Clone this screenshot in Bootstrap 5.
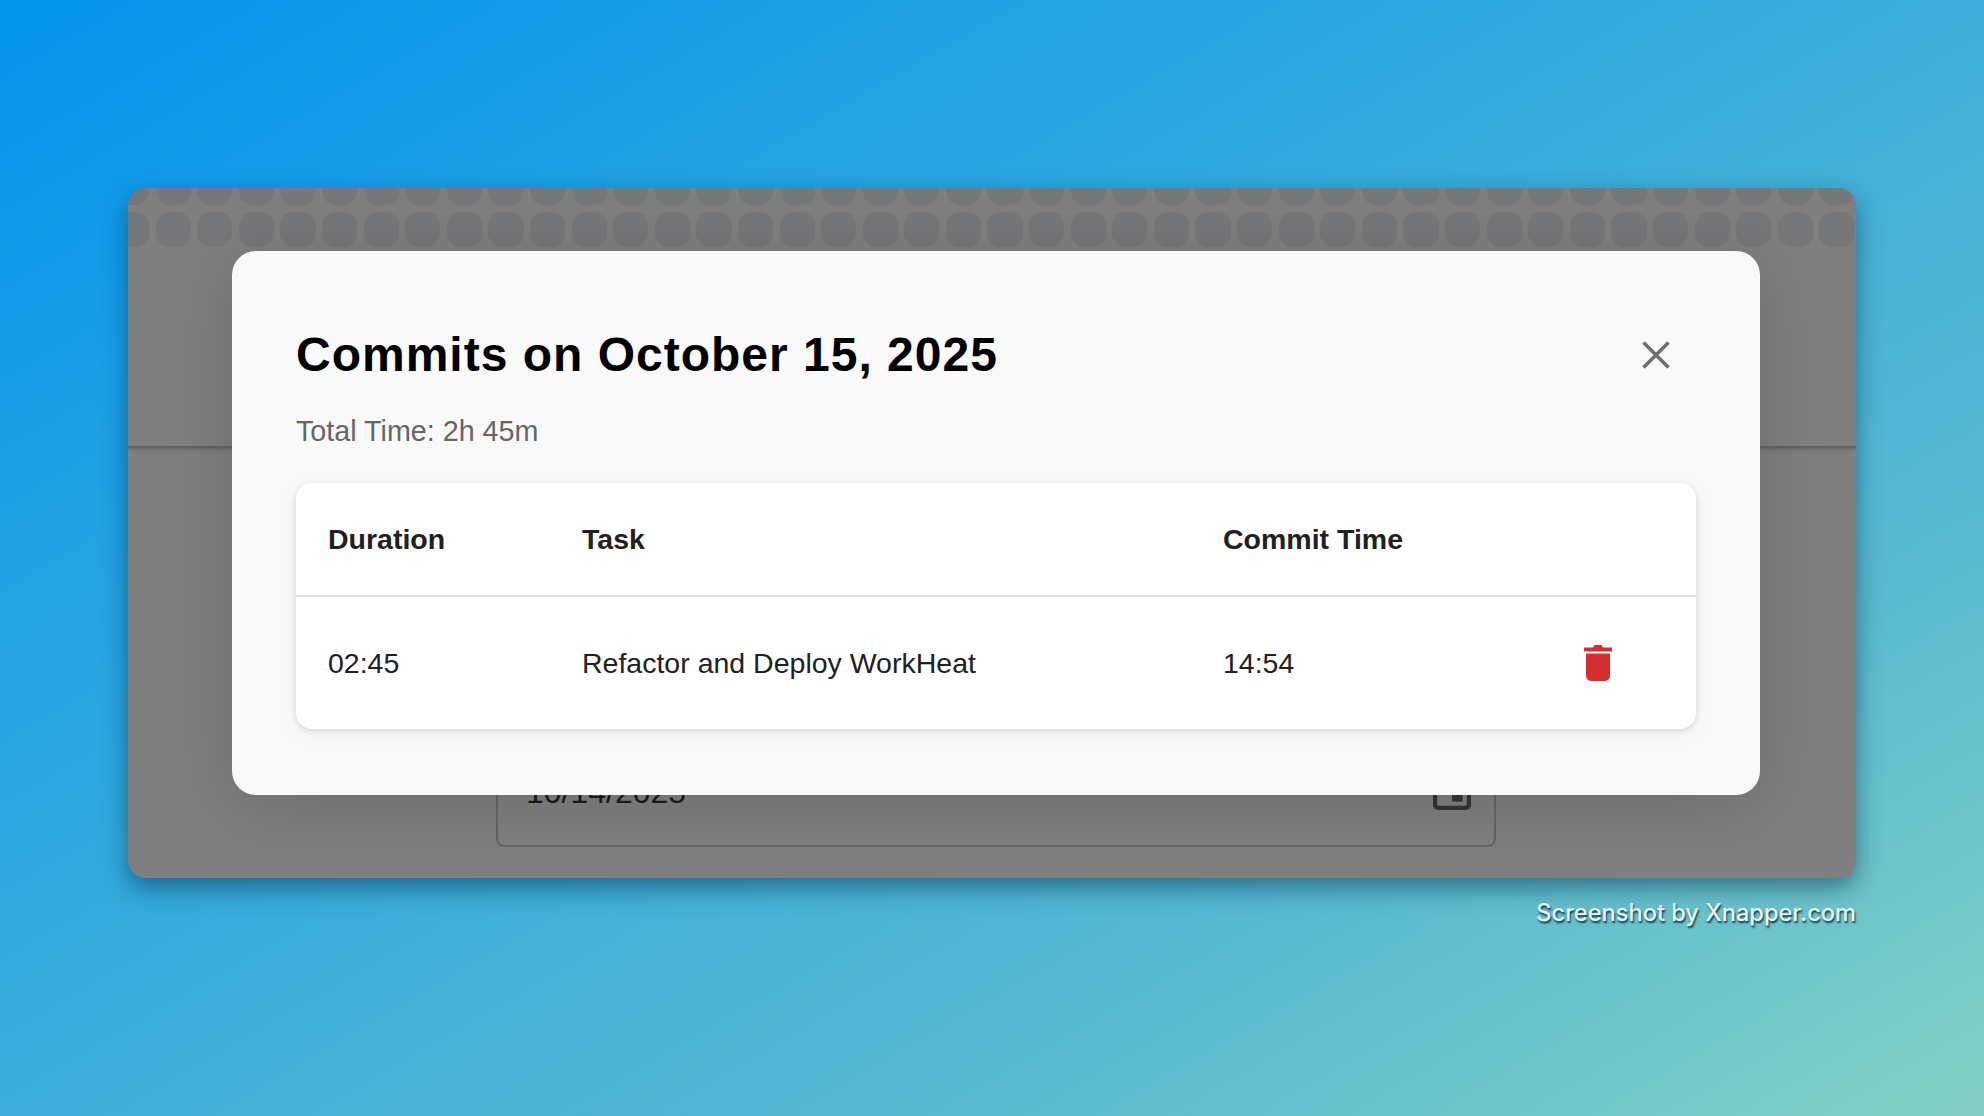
<!DOCTYPE html>
<html lang="en">
<head>
<meta charset="utf-8">
<title>Commits</title>
<link href="https://cdn.jsdelivr.net/npm/bootstrap@5.3.0/dist/css/bootstrap.min.css" rel="stylesheet">
<style>
html,body{height:100%}
body{background:linear-gradient(150deg,#0495ee 0%,#36abdc 45%,#5abbd0 75%,#82d0c3 100%);font-family:"Liberation Sans",Arial,sans-serif;padding:188px 128px 0;overflow:hidden}
.app-window{height:690px;background:#7f7f7f;border-radius:18px;box-shadow:0 10px 24px rgba(0,40,70,.5);overflow:hidden}
.hero-band{height:260px;border-bottom:2px solid #626262;box-shadow:0 1px 4px rgba(0,0,0,.25)}
.cell-row{margin-left:-14px;gap:6.42px;overflow:hidden}
.cell-row.cut{height:17px;align-items:flex-end;margin-bottom:7px}
.heat-cell{flex:0 0 35.2px;height:35px;border-radius:14px;background:#767779}
.date-box{margin:78px 0 0 368px;width:1000px;height:321px;border:2px solid #656565;border-radius:8px;padding:0 23px 0 28px;font-size:32px;color:#1c1c1c}
.date-box .date-text{line-height:37px;margin-bottom:34px}
.date-box svg{width:38px;height:38px;margin-bottom:35px}
.dialog-box{left:104px;top:63px;width:1528px;height:544px;background:#f9f9f9;border-radius:24px;padding:78px 64px 64px;box-shadow:0 10px 70px rgba(0,0,0,.14)}
.dialog-title{font-size:48px;line-height:52px;font-weight:700;color:#000;letter-spacing:1px}
.dialog-sub{font-size:28.7px;line-height:36px;color:#666;margin-top:32px;margin-bottom:34px}
.close-x{width:40px;height:40px;margin-right:20px;background:none;border:0;padding:0}
.data-card{background:#fff;border-radius:16px;box-shadow:0 2px 6px rgba(0,0,0,.12),0 4px 24px rgba(0,0,0,.04);overflow:hidden}
.data-table{margin:0;font-size:28.5px;color:#212121;table-layout:fixed}
.data-table th,.data-table td{padding:0 0 0 32px;vertical-align:middle;border:0;background:transparent;color:#212121;font-weight:400}
.data-table th{height:113px;font-weight:700;border-bottom:2px solid #e0e0e0}
.data-table td{height:133px}
.col-a{width:254px}.col-b{width:641px}.col-c{width:304px}
.trash{width:28px;height:36px;display:block;margin-left:57px}
.credit{font-family:Inter,"Liberation Sans",sans-serif;font-size:23.6px;font-weight:500;line-height:30px;color:#eaf6f7;text-shadow:1px 2px 2px rgba(0,40,60,.9);margin-top:20px}
</style>
</head>
<body>
<div class="app-window position-relative">
  <div class="hero-band">
    <div class="cell-row cut d-flex" id="r1"></div>
    <div class="cell-row d-flex" id="r2"></div>
  </div>
  <div class="date-box d-flex justify-content-between align-items-end">
    <span class="date-text">10/14/2025</span>
    <svg viewBox="0 0 36 36" fill="none"><rect x="2" y="6" width="32" height="28" rx="3" stroke="#363636" stroke-width="4"/><rect x="18" y="20" width="10" height="8" fill="#363636"/></svg>
  </div>
  <div class="dialog-box position-absolute">
    <div class="d-flex justify-content-between align-items-center">
      <h1 class="dialog-title m-0">Commits on October 15, 2025</h1>
      <button class="close-x d-flex align-items-center justify-content-center" aria-label="Close">
        <svg width="28" height="28" viewBox="0 0 28 28"><path d="M1.500 1.500 26.500 26.500M26.500 1.500 1.500 26.500" stroke="#6f6f6f" stroke-width="3.600"/></svg>
      </button>
    </div>
    <p class="dialog-sub">Total Time: 2h 45m</p>
    <div class="data-card">
      <table class="table data-table">
        <thead><tr><th class="col-a">Duration</th><th class="col-b">Task</th><th class="col-c">Commit Time</th><th></th></tr></thead>
        <tbody><tr><td>02:45</td><td>Refactor and Deploy WorkHeat</td><td>14:54</td><td>
          <svg class="trash" viewBox="0 0 28 36"><path d="M0 2.500h9L10.500 0h7L19 2.500h9V6.500H0zM2 8.500h24V31a5 5 0 0 1-5 5H7a5 5 0 0 1-5-5z" fill="#d32f2f"/></svg>
        </td></tr></tbody>
      </table>
    </div>
  </div>
</div>
<div class="credit text-end">Screenshot by Xnapper.com</div>
<script>
for (const id of ['r1','r2']) {
  const row = document.getElementById(id);
  for (let i = 0; i < 43; i++) {
    const c = document.createElement('div');
    c.className = 'heat-cell';
    row.appendChild(c);
  }
}
</script>
<script src="https://cdn.jsdelivr.net/npm/bootstrap@5.3.0/dist/js/bootstrap.bundle.min.js"></script>
</body>
</html>
